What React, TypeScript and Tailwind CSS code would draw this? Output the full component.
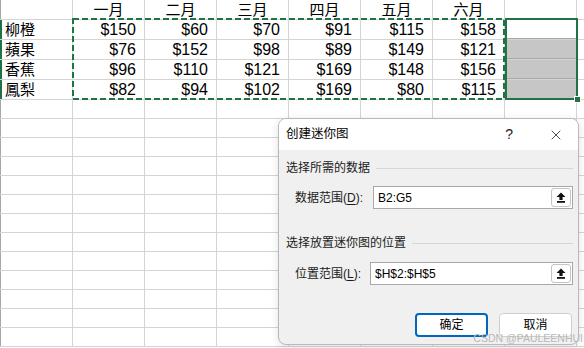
import { X } from 'lucide-react';

const months = ['一月', '二月', '三月', '四月', '五月', '六月'];

const data: { name: string; values: number[] }[] = [
  { name: '柳橙', values: [150, 60, 70, 91, 115, 158] },
  { name: '蘋果', values: [76, 152, 98, 89, 149, 121] },
  { name: '香蕉', values: [96, 110, 121, 169, 148, 156] },
  { name: '鳳梨', values: [82, 94, 102, 169, 80, 115] },
];

const cjk = { fontFamily: '"Liberation Sans", "Noto Sans CJK TC", sans-serif' };
const ui = { fontFamily: '"Liberation Sans", "Noto Sans CJK SC", sans-serif' };

function EmptyCells({ from, count }: { from: number; count: number }) {
  return (
    <>
      {Array.from({ length: count }).map((_, i) => (
        <div key={from + i} className="w-[72px] shrink-0 border-r border-[#d4d4d4]" />
      ))}
    </>
  );
}

function CollapseButton() {
  return (
    <div className="absolute right-[1px] top-[1px] bottom-[1px] w-[20px] rounded-[3px] border border-[#c4c4c4] bg-white flex items-center justify-center">
      <svg width="10" height="11" viewBox="0 0 10 11">
        <path d="M5 0.5 L9.5 5 H6.6 V8 H3.4 V5 H0.5 Z" fill="#111" />
        <rect x="1" y="9" width="8" height="1.8" fill="#111" />
      </svg>
    </div>
  );
}

function RangeRow({ label, hotkey, value, labelWidth }: { label: string; hotkey: string; value: string; labelWidth: string }) {
  return (
    <div className="flex items-center pl-[9px] pr-[5px]">
      <div className={`${labelWidth} shrink-0 text-[12px] text-[#1a1a1a]`}>
        {label}(<span className="underline underline-offset-2">{hotkey}</span>):
      </div>
      <div className="relative flex-1 h-[23px] bg-white border border-[#a8a8a8] flex items-center pl-[4px] text-[12px] text-black">
        {value}
        <CollapseButton />
      </div>
    </div>
  );
}

function SectionLabel({ text }: { text: string }) {
  return (
    <div className="flex items-center h-[16px] pr-[5px]">
      <span className="text-[12px] text-[#1a1a1a] leading-none">{text}</span>
      <div className="flex-1 h-px bg-[#d6d6d6] ml-[6px]" />
    </div>
  );
}

export default function App() {
  return (
    <div className="relative w-[584px] h-[348px] overflow-hidden bg-white" style={cjk}>
      {/* header row */}
      <div className="flex h-[20px] border-b border-[#d4d4d4]">
        <div className="w-[73px] shrink-0 border-l border-r border-[#d4d4d4] border-l-[#a6a6a6]" />
        {months.map(m => (
          <div key={m} className="w-[72px] shrink-0 border-r border-[#d4d4d4] flex items-center justify-center text-[15px] text-black leading-none">
            {m}
          </div>
        ))}
        <EmptyCells from={0} count={2} />
      </div>

      {/* data rows */}
      {data.map((row, r) => (
        <div key={row.name} className="flex h-[20px] border-b border-[#d4d4d4]">
          <div className="w-[73px] shrink-0 border-l-2 border-l-[#217346] border-r border-[#d4d4d4] flex items-center pl-[3px] text-[15px] text-black leading-none">
            {row.name}
          </div>
          {row.values.map((v, i) => (
            <div key={i} className="w-[72px] shrink-0 border-r border-[#d4d4d4] flex items-center justify-end pr-[8px] text-[16px] text-black leading-none">
              ${v}
            </div>
          ))}
          <div className={`w-[72px] shrink-0 border-r border-[#d4d4d4] ${r > 0 ? 'bg-[#c6c6c6]' : 'bg-white'} ${r < 3 ? 'shadow-[inset_0_-1px_0_#a9a9a9]' : ''}`} />
          <EmptyCells from={10} count={1} />
        </div>
      ))}

      {/* empty rows */}
      {Array.from({ length: 13 }).map((_, r) => (
        <div key={r} className="flex h-[19px] border-b border-[#d4d4d4]">
          <div className="w-[73px] shrink-0 border-l border-r border-[#d4d4d4] border-l-[#a6a6a6]" />
          <EmptyCells from={20} count={8} />
        </div>
      ))}

      {/* copy marquee around B2:G5 */}
      <svg className="absolute left-[72px] top-[18px]" width="434" height="83">
        <rect x="1" y="1" width="431" height="80" fill="none" stroke="#217346" strokeWidth="2" strokeDasharray="6 3" />
      </svg>

      {/* selected H2:H5 */}
      <div className="absolute left-[505px] top-[18px] w-[73px] h-[82px] border-2 border-[#217346]" />
      <div className="absolute left-[574px] top-[96px] w-[7px] h-[7px] bg-[#217346] border border-white" />

      {/* dialog */}
      <div className="absolute left-[278px] top-[118px] w-[301px] h-[227px] rounded-lg border border-[#b9b9b9] bg-[#f0f0f0] overflow-hidden shadow-[0_2px_8px_rgba(0,0,0,0.12)]" style={ui}>
        <div className="h-[31px] bg-white flex items-center pl-[7px]">
          <span className="text-[12.5px] text-black">创建迷你图</span>
          <span className="ml-auto mr-[35px] text-[14px] text-[#222]">?</span>
          <X className="mr-[14px] w-[16px] h-[16px] text-[#222]" strokeWidth={1.2} />
        </div>

        <div className="pl-[7px] pt-[10px]">
          <SectionLabel text="选择所需的数据" />
          <div className="mt-[10px]">
            <RangeRow label="数据范围" hotkey="D" value="B2:G5" labelWidth="w-[78px]" />
          </div>

          <div className="mt-[26px]">
            <SectionLabel text="选择放置迷你图的位置" />
          </div>
          <div className="mt-[11px]">
            <RangeRow label="位置范围" hotkey="L" value="$H$2:$H$5" labelWidth="w-[75px]" />
          </div>

          <div className="mt-[28px] flex justify-end gap-[11px] pr-[6px]">
            <button className="w-[73px] h-[24px] rounded-[4px] border-2 border-[#0067c0] bg-white text-[12px] text-black">
              确定
            </button>
            <button className="w-[73px] h-[24px] rounded-[4px] border border-[#cfcfcf] bg-white text-[12px] text-black">
              取消
            </button>
          </div>
        </div>
      </div>

      {/* watermark */}
      <div className="absolute right-[1px] top-[333px] text-[10.5px] text-[#b8b8b8] leading-none" style={{ fontFamily: '"Liberation Sans", sans-serif' }}>
        CSDN @PAULEENHUI
      </div>
    </div>
  );
}
